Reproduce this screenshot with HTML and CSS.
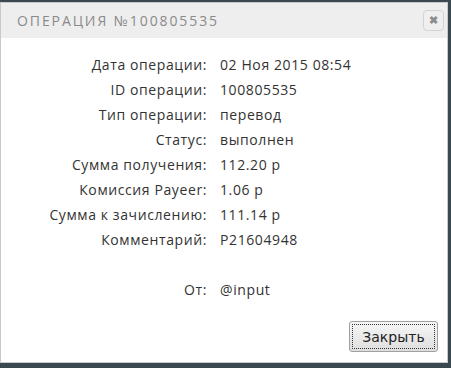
FILE: index.html
```html
<!DOCTYPE html>
<html>
<head>
  <title>Операция</title>
  <link rel="stylesheet" href="styles.css">
</head>
<body>
  <div class="dialog">
    <div class="dialog-title">
      <span>Операция №100805535</span>
      <button class="close-btn" title="Закрыть">&#10006;</button>
    </div>
    <div class="dialog-body">
      <div class="info">
        <div class="label">Дата операции:</div><div class="value">02 Ноя 2015 08:54</div>
        <div class="label">ID операции:</div><div class="value">100805535</div>
        <div class="label">Тип операции:</div><div class="value">перевод</div>
        <div class="label">Статус:</div><div class="value">выполнен</div>
        <div class="label">Сумма получения:</div><div class="value">112.20 р</div>
        <div class="label">Комиссия Payeer:</div><div class="value">1.06 р</div>
        <div class="label">Сумма к зачислению:</div><div class="value">111.14 р</div>
        <div class="label">Комментарий:</div><div class="value">P21604948</div>
        <div class="label spacer"></div><div class="value spacer"></div>
        <div class="label">От:</div><div class="value">@input</div>
      </div>
    </div>
    <div class="dialog-buttons">
      <button class="btn">Закрыть</button>
    </div>
  </div>
</body>
</html>
```

FILE: styles.css
```css
body {
  margin: 0;
  padding: 2px 3px 5px 0;
  background-color: #3a4950;
  font-family: "Open Sans", Arial, sans-serif;
  height: 368px;
  box-sizing: border-box;
}
.dialog {
  background-color: white;
  border: 1px solid #c9c9c9;
  height: 100%;
  box-sizing: border-box;
  display: flex;
  flex-direction: column;
}
.dialog-title {
  background-color: #eeeeee;
  height: 35px;
  display: flex;
  align-items: center;
  justify-content: space-between;
  padding: 0 3px 0 16px;
}
.dialog-title span {
  text-transform: uppercase;
  color: #8a8a8a;
  font-size: 14px;
  letter-spacing: 1.9px;
}
.close-btn {
  width: 21px;
  height: 21px;
  padding: 0;
  border: 1px solid #d3d3d3;
  border-radius: 4px;
  background-color: #efefef;
  color: #8c8c8c;
  font-size: 11px;
  font-weight: bold;
  line-height: 19px;
}
.dialog-body {
  flex: 1;
  padding-top: 17px;
}
.info {
  display: grid;
  grid-template-columns: 206px auto;
  column-gap: 13px;
  row-gap: 6px;
  font-size: 14px;
  letter-spacing: 0.6px;
  color: #333;
  line-height: 19px;
}
.label {
  text-align: right;
}
.spacer {
  height: 19px;
}
.dialog-buttons {
  display: flex;
  justify-content: flex-end;
  padding: 0 9px 10px 0;
}
.btn {
  width: 89px;
  height: 31px;
  font-family: "DejaVu Sans", Verdana, sans-serif;
  font-size: 14px;
  color: #222;
  border: 1px solid #a0a0a0;
  border-radius: 3px;
  background: linear-gradient(#f6f6f6, #dedede);
  outline: 1px dotted #333;
  outline-offset: -4px;
}
```
